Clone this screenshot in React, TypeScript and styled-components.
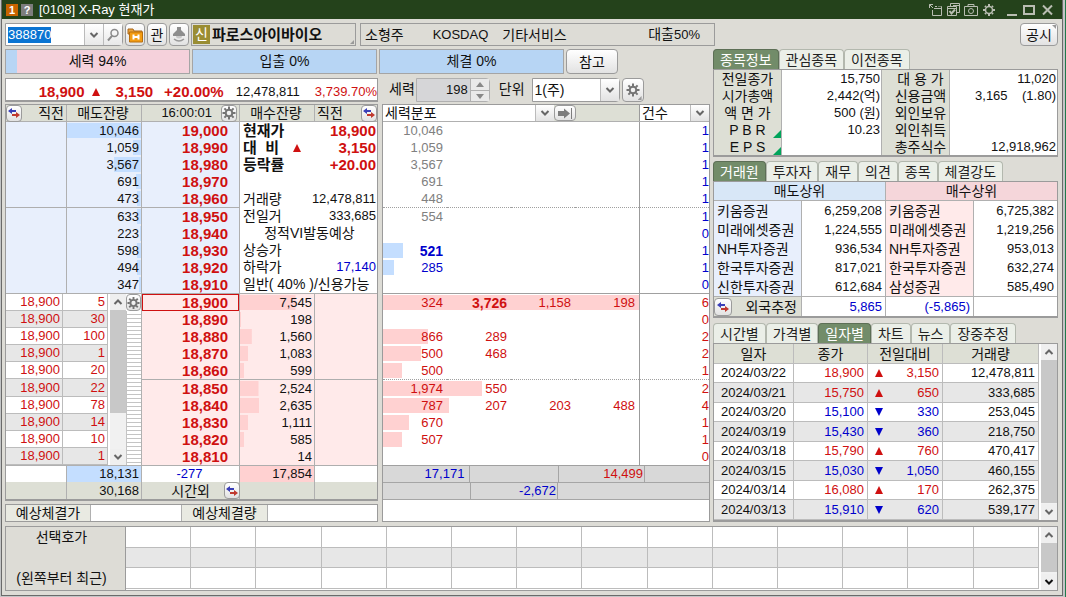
import React, { useEffect, useRef } from 'react';
import styled, { createGlobalStyle, css } from 'styled-components';

const RED = '#cf1010';
const BLUE = '#0000cc';
const LINE = '#9b9b9b';
const FACE = '#dddcd6';
const HEAD = '#dddfd5';

const GlobalStyle = createGlobalStyle`
  *, *::before, *::after { box-sizing: border-box; }
  body {
    margin: 0;
    background: linear-gradient(90deg, #c3c5c6 0 calc(100% - 1px), #1f7a4a 0);
    font-family: "Liberation Sans", "Noto Sans CJK KR", sans-serif;
    font-size: 14px;
    line-height: 16px;
    color: #111;
  }
  button, input, select { font: inherit; color: inherit; }
  table { border-collapse: separate; border-spacing: 0; table-layout: fixed; width: 100%; }
  td, th { padding: 0; font-weight: 400; white-space: nowrap; vertical-align: middle; }
`;

type Tone = 'red' | 'blue' | 'gray' | undefined;
const toneOf = (t: Tone) => (t === 'red' ? RED : t === 'blue' ? BLUE : t === 'gray' ? '#808080' : '#111');

const Window = styled.main`
  margin: 0 3px 0 1px;
  border: 1px solid #6a6a6a;
  border-top: 0;
  background: ${FACE};
`;
const TitleBar = styled.header`
  height: 19px;
  padding: 0 8px 0 4px;
  background: #24421b;
  color: #fff;
  display: flex;
  align-items: center;
  gap: 3px;
`;
const TitleBadge = styled.span<{ $bg: string }>`
  width: 12px;
  height: 12px;
  line-height: 12px;
  font-size: 11px;
  font-weight: 700;
  text-align: center;
  background: ${(p) => p.$bg};
`;
const Title = styled.h1`
  margin: 0 auto 0 3px;
  font-size: 13px;
  font-weight: 400;
`;
const WindowButtons = styled.div`
  display: flex;
  gap: 4px;
  color: #b9bdb2;
  & + & { margin-left: 5px; }
`;
const WindowButton = styled.button`
  padding: 0;
  border: 0;
  background: none;
  height: 14px;
  display: block;
  color: inherit;
  svg { display: block; }
`;
const Content = styled.div`
  padding: 4px 4px 4px 3px;
`;

/* ---------- generic controls ---------- */
const raised = css`
  border: 1px solid ${LINE};
  border-radius: 4px;
  background: linear-gradient(#fff, #e2e2e2);
  padding: 0;
  display: flex;
  align-items: center;
  justify-content: center;
`;
const Button = styled.button<{ $w: number }>`
  ${raised}
  width: ${(p) => p.$w}px;
  position: relative;
  flex: none;
`;
const SmallButton = styled.button`
  ${raised}
  width: 16px;
  height: 17px;
  flex: none;
`;
const Corner = styled.i<{ $pos: 'tr' | 'br' }>`
  position: absolute;
  right: 1px;
  ${(p) => (p.$pos === 'tr' ? 'top: 1px;' : 'bottom: 1px;')}
  width: 4px;
  height: 4px;
  background: #999;
  clip-path: ${(p) => (p.$pos === 'tr' ? 'polygon(0 0, 100% 0, 100% 100%)' : 'polygon(100% 0, 100% 100%, 0 100%)')};
`;
const Num = styled.span<{ $tone?: Tone; $bold?: boolean }>`
  font-size: ${(p) => (p.$bold ? 15 : 13)}px;
  font-weight: ${(p) => (p.$bold ? 700 : 400)};
  color: ${(p) => toneOf(p.$tone)};
`;

/* ---------- toolbar ---------- */
const Toolbar = styled.div`
  height: 23px;
  display: flex;
  gap: 2px;
`;
const CodeBox = styled.div`
  display: flex;
  width: 118px;
  border: 1px solid ${LINE};
  background: #fff;
  border-radius: 0 4px 4px 0;
`;
const CodeInput = styled.input`
  width: 78px;
  min-width: 0;
  border: 0;
  padding: 0 2px;
  font-size: 13px;
  outline: 0;
  &::selection { background: #0a74d2; color: #fff; }
`;
const InnerButton = styled.button`
  flex: 1;
  border: 0;
  border-left: 1px solid #bbb;
  padding: 0;
  background: linear-gradient(#fff, #e8e8e8);
  display: flex;
  align-items: center;
  justify-content: center;
`;
const IconButtons = styled.div`
  display: flex;
  gap: 2px;
`;
const Field = styled.div<{ $w: number }>`
  flex: 0 1 ${(p) => p.$w}px;
  border: 1px solid ${LINE};
  display: flex;
  align-items: center;
  position: relative;
  white-space: nowrap;
`;
const StockBadge = styled.span`
  margin: 0 2px 0 1px;
  width: 17px;
  line-height: 19px;
  text-align: center;
  color: #fff;
  background: #9a8d33;
`;
const StockName = styled.strong`
  font-size: 15px;
`;
const Traits = styled(Field)`
  margin-left: 2px;
  padding: 0 14px 0 4px;
  > :nth-child(2) { margin-left: 29px; }
  > :nth-child(3) { margin-left: 14px; }
  > :last-child { margin-left: auto; }
`;
const Push = styled.div`
  margin-left: auto;
  display: flex;
`;

/* ---------- body ---------- */
const Body = styled.div`
  margin-top: 3px;
  display: grid;
  grid-template-columns: minmax(0, 705fr) minmax(0, 345fr);
  gap: 3px;
`;
const Main = styled.div`
  display: flex;
  flex-direction: column;
`;
const Bars = styled.div`
  height: 25px;
  display: flex;
  gap: 2px;
  padding-right: 92px;
`;
const Bar = styled.div<{ $low: number }>`
  flex: 1;
  border: 1px solid #a5a5a5;
  background: linear-gradient(90deg, #b7d5f4 ${(p) => p.$low}%, #f5d1db ${(p) => p.$low}%);
  text-align: center;
  line-height: 23px;
`;
const LeftGrid = styled.div`
  flex: 1;
  display: grid;
  grid-template-columns: minmax(0, 373fr) minmax(0, 328fr);
  column-gap: 4px;
`;
const QuoteRow = styled(LeftGrid)`
  flex: none;
  margin: 4px 0 3px;
  height: 23px;
`;
const QuoteBox = styled.div`
  border: 1px solid ${LINE};
  border-bottom-width: 2px;
  background: #fff;
  display: flex;
  align-items: center;
  justify-content: flex-end;
  padding-top: 4px;
  white-space: nowrap;
  > :nth-child(2) { margin: 0 16px 0 7px; }
  > :nth-child(4) { margin: 0 12px 0 11px; }
  > :last-child { margin-left: 15px; }
`;
const Options = styled.div`
  display: flex;
  padding-left: 7px;
  line-height: 22px;
  label { flex: none; }
`;
const Spinner = styled.div`
  display: flex;
  width: 74px;
  margin: 0 9px 0 1px;
  border: 1px solid #b0b0b0;
  border-radius: 0 4px 4px 0;
  background: #d6d6d8;
`;
const SpinInput = styled.input`
  width: 53px;
  min-width: 0;
  border: 0;
  padding: 0 2px;
  background: none;
  text-align: right;
  font-size: 13px;
`;
const SpinButtons = styled.div`
  flex: 1;
  display: grid;
  grid-template-rows: 1fr 1fr;
  border-left: 1px solid #b0b0b0;
`;
const SpinButton = styled.button`
  border: 0;
  padding: 0;
  background: #e9e9e9;
  display: flex;
  align-items: center;
  justify-content: center;
  & + & { border-top: 1px solid #b0b0b0; }
`;
const SelectWrap = styled.span<{ $w: number; $flat?: boolean }>`
  flex: none;
  width: ${(p) => p.$w}px;
  display: flex;
  position: relative;
  background: #fff;
  ${(p) => !p.$flat && css`border: 1px solid ${LINE}; border-radius: 0 4px 4px 0; margin: 0 2px 0 7px;`}
`;
const Select = styled.select`
  appearance: none;
  width: 100%;
  border: 0;
  padding: 0 2px;
  background: transparent;
  line-height: 16px;
`;
const SelectArrow = styled.span`
  position: absolute;
  inset: 0 0 0 auto;
  width: 19px;
  border-left: 1px solid #bbb;
  background: linear-gradient(#fff, #e2e2e2);
  display: flex;
  align-items: center;
  justify-content: center;
  pointer-events: none;
`;

/* ---------- order ladder ---------- */
const Stack = styled.div`
  display: flex;
  flex-direction: column;
  justify-content: space-between;
`;
const Panel = styled.section`
  border: 1px solid ${LINE};
  background: #fff;
`;
const LadderPanel = styled(Panel)`
  border-bottom-width: 2px;
`;
const LadderColumns = css`
  display: grid;
  grid-template-columns: minmax(0, 61fr) minmax(0, 75fr) minmax(0, 98fr) minmax(0, 75fr) minmax(0, 62fr);
`;
const LadderHead = styled.div`
  ${LadderColumns}
  height: 17px;
  background: ${HEAD};
  border-bottom: 1px solid #b0b0b0;
`;
const HeadCell = styled.div<{ $align?: string }>`
  border-right: 1px solid #b0b0b0;
  display: flex;
  align-items: center;
  justify-content: ${(p) => p.$align || 'center'};
  padding-right: 2px;
  white-space: nowrap;
  &:last-child { border-right: 0; padding: 0 0 0 2px; }
  ${SmallButton} { margin: -1px 0; }
`;
const Clock = styled(Num)`
  margin-right: 9px;
`;
const LadderBody = styled.div`
  ${LadderColumns}
`;
const Span = styled.div<{ $n: number }>`
  grid-column: span ${(p) => p.$n};
  min-width: 0;
`;
const Row = styled.tr<{ $rule?: boolean }>`
  > td, > th {
    height: ${(p) => (p.$rule ? 18 : 17)}px;
    ${(p) => p.$rule && 'border-bottom: 1px solid #aeaeae;'}
  }
`;
const AskCell = styled.td`
  border-right: 1px solid #b0b0b0;
  background: #e8effc;
  text-align: right;
  padding-right: 2px;
  font-size: 13px;
`;
const AskQty = styled(AskCell)`
  background: linear-gradient(#c4deff, #c4deff) no-repeat right 1px / var(--fill) 15px #e8effc;
`;
const PriceCell = styled.td<{ $side: 'ask' | 'bid'; $hit?: boolean }>`
  border-right: 1px solid #b0b0b0;
  background: ${(p) => (p.$side === 'ask' ? '#e8effc' : '#ffeaea')};
  color: ${RED};
  font-size: 15px;
  font-weight: 700;
  text-align: right;
  padding-right: 11px;
  ${(p) => p.$hit && `box-shadow: inset 0 0 0 1px ${RED};`}
`;
const BidCell = styled.td`
  background: #ffeaea;
  text-align: right;
  padding-right: 2px;
  font-size: 13px;
`;
const BidQty = styled(BidCell)`
  border-right: 1px solid #b0b0b0;
  background: linear-gradient(#ffd1d1, #ffd1d1) no-repeat left 1px / var(--fill) 15px #ffeaea;
`;
const Facts = styled.dl`
  margin: 0;
  padding: 0 1px 0 3px;
  height: 172px;
  border-bottom: 1px solid #b0b0b0;
  display: grid;
  grid-auto-rows: 17px;
`;
const Fact = styled.div<{ $center?: boolean; $bold?: boolean }>`
  display: flex;
  align-items: center;
  justify-content: ${(p) => (p.$center ? 'center' : 'space-between')};
  white-space: nowrap;
  dt { font-weight: ${(p) => (p.$bold ? 700 : 400)}; font-size: ${(p) => (p.$bold ? 15 : 14)}px; }
  dd { margin: 0; }
  svg { margin: 0 auto 0 14px; }
`;
const TickArea = styled.div`
  height: 172px;
  display: flex;
  border-bottom: 1px solid #b0b0b0;
`;
const TickTable = styled.table`
  flex: 1 1 102px;
  width: auto;
  min-width: 0;
  td {
    height: 17px;
    text-align: right;
    padding-right: 2px;
    font-size: 13px;
    color: ${RED};
    border: 0 solid #bcbcbc;
    border-width: 0 1px 1px 0;
  }
  tr:nth-child(even) td { background: #e7e7e7; }
`;
const ScrollTrack = styled.div`
  flex: none;
  width: 16px;
  margin-left: 2px;
  background: #f1f1f1;
  display: flex;
  flex-direction: column;
  justify-content: space-between;
`;
const ScrollButton = styled.button`
  height: 16px;
  width: 100%;
  border: 0;
  padding: 0;
  flex: none;
  background: #efefef;
  display: flex;
  align-items: center;
  justify-content: center;
`;
const Thumb = styled.div<{ $size: number }>`
  height: ${(p) => p.$size}%;
  background: #c8c8c8;
  margin-bottom: auto;
`;
const GearStrip = styled.div`
  flex: none;
  width: 16px;
  border-right: 1px solid #b0b0b0;
  display: flex;
  flex-direction: column;
  ${SmallButton} { width: 15px; }
`;
const Hatch = styled.div`
  flex: 1;
  border-left: 1px solid #c4c4c4;
  background: repeating-linear-gradient(#fff 0 3px, #c4c4c4 3px 4px);
`;
const TotalRow = styled.tr<{ $gray?: boolean }>`
  td {
    height: ${(p) => (p.$gray ? 17 : 16)}px;
    background: ${(p) => (p.$gray ? HEAD : '#fff')};
    border-right: 1px solid #b0b0b0;
    text-align: right;
    padding-right: 2px;
    font-size: 13px;
  }
  td:last-child { border-right: 0; }
`;
const TotalCell = styled.td<{ $fill: string }>`
  && { background: ${(p) => p.$fill}; }
`;
const MidCell = styled.td`
  && { text-align: center; }
`;
const OffHours = styled.div`
  display: flex;
  justify-content: flex-end;
  align-items: center;
  gap: 14px;
  font-size: 14px;
  height: 17px;
  margin-right: -3px;
`;
const ExpectBox = styled(Panel)`
  height: 18px;
  display: grid;
  grid-template-columns: minmax(0, 85fr) minmax(0, 91fr) minmax(0, 86fr) minmax(0, 109fr);
`;
const ExpectLabel = styled.label`
  background: #e9eae2;
  text-align: center;
  border-right: 1px solid #b0b0b0;
  white-space: nowrap;
`;
const ExpectInput = styled.input`
  min-width: 0;
  width: 100%;
  border: 0;
  border-right: 1px solid #b0b0b0;
  background: #fff;
  padding: 0 2px;
  &:last-child { border-right: 0; }
`;

/* ---------- distribution ---------- */
const DistPanel = styled(Panel)`
  display: flex;
  flex-direction: column;
`;
const DistHead = styled.div`
  height: 17px;
  display: grid;
  grid-template-columns: minmax(0, 257fr) minmax(0, 69fr);
  background: ${HEAD};
  border-bottom: 1px solid #b0b0b0;
  > div { display: flex; }
  > div:first-child { border-right: 1px solid ${LINE}; }
  ${SmallButton} { width: 22px; height: 16px; }
`;
const DistRow = styled.tr<{ $rule?: 'solid' | 'dotted' }>`
  background: linear-gradient(var(--tint), var(--tint)) no-repeat left 1px / var(--fill) 15px;
  td {
    height: ${(p) => (p.$rule ? 18 : 17)}px;
    ${(p) => p.$rule && `border-bottom: 1px ${p.$rule} #a0a0a0;`}
  }
`;
const DistCell = styled.td<{ $tone: Tone; $bold?: boolean }>`
  text-align: right;
  padding-right: 4px;
  color: ${(p) => toneOf(p.$tone)};
  font-size: ${(p) => (p.$bold ? 14 : 13)}px;
  font-weight: ${(p) => (p.$bold ? 700 : 400)};
`;
const CountCell = styled.td<{ $tone: Tone }>`
  border-left: 1px solid ${LINE};
  background: #fff;
  text-align: right;
  color: ${(p) => toneOf(p.$tone)};
  font-size: 13px;
`;
const SumTable = styled.table`
  background: #d8d8d8;
  td {
    height: 17px;
    border-bottom: 1px solid #a5a5a5;
    text-align: right;
    padding-right: 1px;
    font-size: 13px;
  }
`;
const SumCell = styled.td<{ $tone: Tone }>`
  color: ${(p) => toneOf(p.$tone)};
  border-right: 1px solid #a5a5a5;
  border-left: 1px solid #a5a5a5;
  &:first-child { border-left: 0; }
`;

/* ---------- right side ---------- */
const Side = styled.div`
  display: flex;
  flex-direction: column;
  min-width: 0;
`;
const Tabs = styled.div`
  display: flex;
  height: 20px;
  white-space: nowrap;
`;
const Tab = styled.button<{ $on?: boolean }>`
  border: 1px solid ${(p) => (p.$on ? '#5d6f56' : '#b3b8ae')};
  border-bottom: 0;
  border-radius: 4px 4px 0 0;
  padding: 0 6px;
  line-height: 18px;
  background: ${(p) => (p.$on ? '#728c69' : '#ebefe8')};
  color: ${(p) => (p.$on ? '#fff' : '#222')};
`;
const SidePanel = styled(Panel)<{ $gap?: number }>`
  border-bottom-width: 2px;
  margin-bottom: ${(p) => p.$gap || 0}px;
`;
const InfoLabel = styled.th<{ $indent?: boolean }>`
  height: 17px;
  background: ${HEAD};
  border-right: 1px solid #b0b0b0;
  position: relative;
  padding-left: ${(p) => (p.$indent ? 10 : 0)}px;
`;
const InfoValue = styled.td`
  height: 17px;
  text-align: right;
  padding-right: 1px;
  font-size: 13px;
  white-space: pre;
  &:nth-child(2) { border-right: 1px solid #b0b0b0; }
`;
const GreenCorner = styled.i`
  position: absolute;
  right: 0;
  bottom: 0;
  width: 8px;
  height: 8px;
  background: #00a45a;
  clip-path: polygon(100% 0, 100% 100%, 0 100%);
`;
const BrokerHead = styled.th<{ $bg: string }>`
  height: 19px;
  background: ${(p) => p.$bg};
  border-bottom: 1px solid #b0b0b0;
  &:first-child { border-right: 1px solid #b0b0b0; }
`;
const BrokerName = styled.td<{ $bg: string }>`
  height: 19px;
  background: ${(p) => p.$bg};
  border-right: 1px solid #b0b0b0;
  padding-left: 3px;
`;
const BrokerQty = styled.td`
  text-align: right;
  padding-right: 3px;
  font-size: 13px;
  &:nth-child(2) { border-right: 1px solid #b0b0b0; }
`;
const ForeignRow = styled.tr`
  td, th { height: 20px; border-top: 1px solid #b0b0b0; border-right: 1px solid #b0b0b0; }
  td { text-align: right; padding-right: 3px; font-size: 13px; color: ${BLUE}; }
  td:last-child { border-right: 0; }
  th { background: ${HEAD}; }
`;
const ForeignLabel = styled.div`
  display: flex;
  align-items: center;
  justify-content: space-between;
  padding-right: 4px;
  ${SmallButton} { height: 18px; width: 18px; }
`;
const HistoryWrap = styled.div`
  display: flex;
`;
const HistoryTable = styled.table`
  flex: 1;
  width: auto;
  min-width: 0;
  th, td { border: 0 solid #bcbcbc; border-width: 0 1px 1px 0; }
  th { height: 20px; background: ${HEAD}; }
  td { height: 19px; font-size: 13px; text-align: right; padding-right: 3px; }
  tbody tr:nth-child(even) td { background: #e7e7e7; height: 20px; }
  td:first-child { text-align: center; padding: 0; }
`;
const Delta = styled.span`
  display: flex;
  align-items: center;
  justify-content: space-between;
  padding-left: 7px;
`;

/* ---------- bottom ---------- */
const BottomPanel = styled(Panel)`
  margin-top: 4px;
  height: 65px;
  display: flex;
`;
const BottomLabel = styled.div`
  flex: none;
  width: 120px;
  padding: 2px 8px 4px 0;
  background: ${FACE};
  border-right: 1px solid ${LINE};
  display: flex;
  flex-direction: column;
  justify-content: space-between;
  text-align: center;
`;
const BlankTable = styled.table`
  flex: 1;
  width: auto;
  min-width: 0;
  height: 62px;
  td { border: 0 solid #bcbcbc; border-width: 0 1px 1px 0; }
  tr:nth-child(2) td { background: #e7e7e7; }
`;

/* ---------- drawings ---------- */
const Tri = ({ up }: { up: boolean }) => (
  <svg width="8" height="8" viewBox="0 0 8 8" aria-hidden="true">
    <path d={up ? 'M4 0 8 8H0Z' : 'M0 0H8L4 8Z'} fill={up ? RED : BLUE} />
  </svg>
);
const Chevron = ({ up, c = '#666' }: { up?: boolean; c?: string }) => (
  <svg width="10" height="8" viewBox="0 0 10 8" fill="none" stroke={c} strokeWidth="2" aria-hidden="true">
    <path d={up ? 'M1.5 6 5 2.5 8.5 6' : 'M1.5 2 5 5.5 8.5 2'} />
  </svg>
);
const Gear = () => (
  <svg width="14" height="14" viewBox="0 0 14 14" fill="none" stroke="#747474" aria-hidden="true">
    <circle cx="7" cy="7" r="3.3" strokeWidth="2" />
    <path d="M7 .5V3M7 11v2.500M.5 7H3M11 7h2.500M2.400 2.400 4.200 4.200M9.800 9.800l1.800 1.800M11.600 2.400 9.800 4.200M4.200 9.800 2.400 11.600" strokeWidth="2" />
  </svg>
);
const Swap = () => (
  <svg width="14" height="12" viewBox="0 0 14 12" aria-hidden="true">
    <path d="M1 4 5 1V3H9V5H5V7Z" fill="#3a3fb8" />
    <path d="M13 8 9 5V7H5V9H9V11Z" fill="#c0392f" />
  </svg>
);
const Search = () => (
  <svg width="14" height="14" viewBox="0 0 14 14" fill="none" stroke="#8a8a8a" strokeWidth="1.5" aria-hidden="true">
    <circle cx="8.5" cy="5" r="3.5" />
    <path d="M6 7.800 2 12.500" strokeWidth="2" />
  </svg>
);
const Folder = () => (
  <svg width="16" height="16" viewBox="0 0 16 16" aria-hidden="true">
    <path d="M1 2h5l1 2h8v3H1Z" fill="#e8a33d" stroke="#a8661a" />
    <path d="M2.500 5H15.500V15H2.500Z" fill="#f39c12" stroke="#b86f0d" />
    <path d="M6.500 7.500v5M11.500 7.500v5M6.500 10h5" stroke="#fff" strokeWidth="2" />
  </svg>
);
const Lamp = () => (
  <svg width="14" height="16" viewBox="0 0 14 16" aria-hidden="true">
    <path d="M5 0h4v3l4 4v2H1V7l4-4Z" fill="#8d8d8d" />
    <path d="M4 9h6a3 2.500 0 0 1-6 0Z" fill="#c9c9c9" />
    <path d="M2 12q5 4 10 0" fill="none" stroke="#9a9a9a" strokeWidth="1.5" />
  </svg>
);
const Forward = () => (
  <svg width="16" height="11" viewBox="0 0 16 11" aria-hidden="true">
    <path d="M1 3H7V.5L13 5.500 7 10.500V8H1Z" fill="#7d7d7d" />
    <path d="M14.500 0V11" stroke="#7d7d7d" />
  </svg>
);
const line = { width: 14, height: 14, viewBox: '0 0 14 14', fill: 'none', stroke: 'currentColor' };

/* ---------- data ---------- */
const MAX_QTY = 10046;
const asks: [string, string][] = [
  ['10,046', '19,000'], ['1,059', '18,990'], ['3,567', '18,980'], ['691', '18,970'], ['473', '18,960'],
  ['633', '18,950'], ['223', '18,940'], ['598', '18,930'], ['494', '18,920'], ['347', '18,910'],
];
const bids: [string, string][] = [
  ['18,900', '7,545'], ['18,890', '198'], ['18,880', '1,560'], ['18,870', '1,083'], ['18,860', '599'],
  ['18,850', '2,524'], ['18,840', '2,635'], ['18,830', '1,111'], ['18,820', '585'], ['18,810', '14'],
];
const ticks = ['5', '30', '100', '1', '20', '22', '78', '14', '10', '1'];
const fill = (q: string) => ({ '--fill': `${Math.round((Number(q.replace(',', '')) / MAX_QTY) * 100)}%` }) as React.CSSProperties;

type Dist = { v: string[]; n: string; w?: number; tone: Tone; bold?: number };
const dist: Dist[] = [
  { v: ['10,046'], n: '1', tone: 'gray' }, { v: ['1,059'], n: '1', tone: 'gray' }, { v: ['3,567'], n: '1', tone: 'gray' },
  { v: ['691'], n: '1', tone: 'gray' }, { v: ['448'], n: '1', tone: 'gray' }, { v: ['554'], n: '1', tone: 'gray' },
  { v: [], n: '0', tone: 'blue' }, { v: ['521'], n: '1', w: 20, tone: 'blue', bold: 0 }, { v: ['285'], n: '1', w: 11, tone: 'blue' },
  { v: [], n: '0', tone: 'blue' },
  { v: ['324', '3,726', '1,158', '198'], n: '6', w: 257, tone: 'red', bold: 1 }, { v: [], n: '0', tone: 'red' },
  { v: ['866', '289'], n: '2', w: 45, tone: 'red' }, { v: ['500', '468'], n: '2', w: 38, tone: 'red' }, { v: ['500'], n: '1', w: 19, tone: 'red' },
  { v: ['1,974', '550'], n: '2', w: 99, tone: 'red' }, { v: ['787', '207', '203', '488'], n: '4', w: 66, tone: 'red' },
  { v: ['670'], n: '1', w: 26, tone: 'red' }, { v: ['507'], n: '1', w: 19, tone: 'red' }, { v: [], n: '0', tone: 'red' },
];
const distStyle = (d: Dist) => ({
  '--fill': `${((d.w || 0) / 326) * 100}%`,
  '--tint': d.tone === 'red' ? '#ffd1d1' : '#c4deff',
}) as React.CSSProperties;

const info: [string, string, string, string][] = [
  ['전일종가', '15,750', '대 용 가', '11,020'],
  ['시가총액', '2,442(억)', '신용금액', '3,165    (1.80)'],
  ['액 면 가', '500 (원)', '외인보유', ''],
  ['P B R', '10.23', '외인취득', ''],
  ['E P S', '', '총주식수', '12,918,962'],
];
const brokers: [string, string, string, string][] = [
  ['키움증권', '6,259,208', '키움증권', '6,725,382'],
  ['미래에셋증권', '1,224,555', '미래에셋증권', '1,219,256'],
  ['NH투자증권', '936,534', 'NH투자증권', '953,013'],
  ['한국투자증권', '817,021', '한국투자증권', '632,274'],
  ['신한투자증권', '612,684', '삼성증권', '585,490'],
];
const history: [string, string, boolean, string, string][] = [
  ['2024/03/22', '18,900', true, '3,150', '12,478,811'],
  ['2024/03/21', '15,750', true, '650', '333,685'],
  ['2024/03/20', '15,100', false, '330', '253,045'],
  ['2024/03/19', '15,430', false, '360', '218,750'],
  ['2024/03/18', '15,790', true, '760', '470,417'],
  ['2024/03/15', '15,030', false, '1,050', '460,155'],
  ['2024/03/14', '16,080', true, '170', '262,375'],
  ['2024/03/13', '15,910', false, '620', '539,177'],
];

const Cols = ({ w }: { w: number[] }) => (
  <colgroup>{w.map((x, i) => <col key={i} width={`${(x / w.reduce((a, b) => a + b, 0)) * 100}%`} />)}</colgroup>
);
const TabRow = ({ names, on }: { names: string[]; on: number }) => (
  <Tabs role="tablist">
    {names.map((n, i) => <Tab key={n} role="tab" aria-selected={i === on} $on={i === on}>{n}</Tab>)}
  </Tabs>
);
const Scrollbar = ({ size, dark }: { size: number; dark?: boolean }) => (
  <ScrollTrack>
    <ScrollButton aria-label="위로"><Chevron up /></ScrollButton>
    <Thumb $size={size} />
    <ScrollButton aria-label="아래로"><Chevron c={dark ? '#111' : '#666'} /></ScrollButton>
  </ScrollTrack>
);

function TopBar() {
  const code = useRef<HTMLInputElement>(null);
  useEffect(() => {
    code.current?.focus();
    code.current?.select();
  }, []);
  return (
    <Toolbar>
      <CodeBox>
        <CodeInput ref={code} defaultValue="388870" aria-label="종목코드" />
        <InnerButton aria-label="목록"><Chevron /></InnerButton>
        <InnerButton aria-label="검색"><Search /></InnerButton>
      </CodeBox>
      <IconButtons>
        <Button $w={20} aria-label="보유"><Folder /></Button>
        <Button $w={20}>관</Button>
        <Button $w={20} aria-label="알림"><Lamp /></Button>
      </IconButtons>
      <Field $w={165}>
        <StockBadge>신</StockBadge>
        <StockName>파로스아이바이오</StockName>
        <Corner $pos="br" />
      </Field>
      <Traits $w={355}>
        <span>소형주</span>
        <Num>KOSDAQ</Num>
        <span>기타서비스</span>
        <span>대출<Num>50%</Num></span>
      </Traits>
      <Push><Button $w={38}>공시<Corner $pos="tr" /></Button></Push>
    </Toolbar>
  );
}

function Ladder() {
  return (
    <LadderPanel>
      <LadderHead>
        <HeadCell $align="space-between"><SmallButton aria-label="전환"><Swap /></SmallButton>직전</HeadCell>
        <HeadCell>매도잔량</HeadCell>
        <HeadCell $align="flex-end"><Clock>16:00:01</Clock><SmallButton aria-label="설정"><Gear /></SmallButton></HeadCell>
        <HeadCell>매수잔량</HeadCell>
        <HeadCell $align="space-between">직전<SmallButton aria-label="전환"><Swap /></SmallButton></HeadCell>
      </LadderHead>
      <LadderBody>
        <Span $n={3}>
          <table>
            <Cols w={[61, 75, 98]} />
            <tbody>
              {asks.map(([q, p], i) => (
                <Row key={p} $rule={i % 5 === 4}>
                  <AskCell />
                  <AskQty style={fill(q)}>{q}</AskQty>
                  <PriceCell $side="ask">{p}</PriceCell>
                </Row>
              ))}
            </tbody>
          </table>
        </Span>
        <Span $n={2}>
          <Facts>
            <Fact $bold><dt>현재가</dt><dd><Num $bold $tone="red">18,900</Num></dd></Fact>
            <Fact $bold><dt>대&nbsp;&nbsp;비</dt><Tri up /><dd><Num $bold $tone="red">3,150</Num></dd></Fact>
            <Fact $bold><dt>등락률</dt><dd><Num $bold $tone="red">+20.00</Num></dd></Fact>
            <Fact />
            <Fact><dt>거래량</dt><dd><Num>12,478,811</Num></dd></Fact>
            <Fact><dt>전일거</dt><dd><Num>333,685</Num></dd></Fact>
            <Fact $center><dt>정적VI발동예상</dt></Fact>
            <Fact><dt>상승가</dt></Fact>
            <Fact><dt>하락가</dt><dd><Num $tone="blue">17,140</Num></dd></Fact>
            <Fact><dt>일반( 40% )/신용가능</dt></Fact>
          </Facts>
        </Span>
        <Span $n={2}>
          <TickArea>
            <TickTable>
              <Cols w={[57, 45]} />
              <tbody>
                {ticks.map((t, i) => <tr key={i}><td>18,900</td><td>{t}</td></tr>)}
              </tbody>
            </TickTable>
            <Scrollbar size={60} />
            <GearStrip>
              <SmallButton aria-label="설정"><Gear /></SmallButton>
              <Hatch />
            </GearStrip>
          </TickArea>
        </Span>
        <Span $n={3}>
          <table>
            <Cols w={[98, 75, 62]} />
            <tbody>
              {bids.map(([p, q], i) => (
                <Row key={p} $rule={i % 5 === 4}>
                  <PriceCell $side="bid" $hit={i === 0}>{p}</PriceCell>
                  <BidQty style={fill(q)}>{q}</BidQty>
                  <BidCell />
                </Row>
              ))}
            </tbody>
          </table>
        </Span>
      </LadderBody>
      <table>
        <Cols w={[61, 75, 98, 75, 62]} />
        <tbody>
          <TotalRow>
            <td />
            <TotalCell $fill="#c4deff">18,131</TotalCell>
            <MidCell><Num $tone="blue">-277</Num></MidCell>
            <TotalCell $fill="#ffd1d1">17,854</TotalCell>
            <td />
          </TotalRow>
          <TotalRow $gray>
            <td />
            <td>30,168</td>
            <td><OffHours>시간외<SmallButton aria-label="전환"><Swap /></SmallButton></OffHours></td>
            <td />
            <td />
          </TotalRow>
        </tbody>
      </table>
    </LadderPanel>
  );
}

function Distribution() {
  return (
    <DistPanel>
      <DistHead>
        <div>
          <SelectWrap $w={171} $flat>
            <Select aria-label="분포 항목"><option>세력분포</option></Select>
            <SelectArrow><Chevron /></SelectArrow>
          </SelectWrap>
          <SmallButton aria-label="다음"><Forward /></SmallButton>
        </div>
        <div>
          <SelectWrap $w={69} $flat>
            <Select aria-label="건수 항목"><option>건수</option></Select>
            <SelectArrow><Chevron /></SelectArrow>
          </SelectWrap>
        </div>
      </DistHead>
      <table>
        <Cols w={[64, 64, 64, 64, 70]} />
        <tbody>
          {dist.map((d, i) => (
            <DistRow key={i} style={distStyle(d)} $rule={i % 10 === 4 ? 'dotted' : i % 10 === 9 ? 'solid' : undefined}>
              {[0, 1, 2, 3].map((c) => <DistCell key={c} $tone={d.tone} $bold={d.bold === c}>{d.v[c]}</DistCell>)}
              <CountCell $tone={d.tone === 'gray' ? 'blue' : d.tone}>{d.n}</CountCell>
            </DistRow>
          ))}
        </tbody>
      </table>
      <SumTable>
        <Cols w={[87, 88, 87, 64]} />
        <tbody>
          <tr><SumCell $tone="blue">17,171&nbsp;</SumCell><td /><SumCell $tone="red">14,499</SumCell><td /></tr>
          <tr><td /><SumCell $tone="blue">-2,672</SumCell><td /><td /></tr>
        </tbody>
      </SumTable>
    </DistPanel>
  );
}

function SideColumn() {
  return (
    <Side>
      <TabRow names={['종목정보', '관심종목', '이전종목']} on={0} />
      <SidePanel $gap={4}>
        <table>
          <Cols w={[68, 100, 68, 107]} />
          <tbody>
            {info.map(([a, b, c, d], i) => (
              <tr key={a}>
                <InfoLabel scope="row">{a}{i > 2 && <GreenCorner />}</InfoLabel>
                <InfoValue>{b}</InfoValue>
                <InfoLabel scope="row" $indent>{c}</InfoLabel>
                <InfoValue>{d}</InfoValue>
              </tr>
            ))}
          </tbody>
        </table>
      </SidePanel>
      <TabRow names={['거래원', '투자자', '재무', '의견', '종목', '체결강도']} on={0} />
      <SidePanel $gap={5}>
        <table>
          <Cols w={[88, 84, 88, 83]} />
          <thead>
            <tr><BrokerHead colSpan={2} $bg="#d8e7f7">매도상위</BrokerHead><BrokerHead colSpan={2} $bg="#f5d6da">매수상위</BrokerHead></tr>
          </thead>
          <tbody>
            {brokers.map(([a, b, c, d]) => (
              <tr key={a}>
                <BrokerName $bg="#e8effc">{a}</BrokerName><BrokerQty>{b}</BrokerQty>
                <BrokerName $bg="#ffeaea">{c}</BrokerName><BrokerQty>{d}</BrokerQty>
              </tr>
            ))}
            <ForeignRow>
              <th scope="row"><ForeignLabel><SmallButton aria-label="전환"><Swap /></SmallButton>외국추정</ForeignLabel></th>
              <td>5,865</td><td>(-5,865)</td><td />
            </ForeignRow>
          </tbody>
        </table>
      </SidePanel>
      <TabRow names={['시간별', '가격별', '일자별', '차트', '뉴스', '장중추정']} on={2} />
      <SidePanel>
        <HistoryWrap>
          <HistoryTable>
            <Cols w={[80, 74, 75, 96]} />
            <thead><tr><th>일자</th><th>종가</th><th>전일대비</th><th>거래량</th></tr></thead>
            <tbody>
              {history.map(([day, close, up, diff, vol]) => (
                <tr key={day}>
                  <td>{day}</td>
                  <td><Num $tone={up ? 'red' : 'blue'}>{close}</Num></td>
                  <td><Delta><Tri up={up} /><Num $tone={up ? 'red' : 'blue'}>{diff}</Num></Delta></td>
                  <td>{vol}</td>
                </tr>
              ))}
            </tbody>
          </HistoryTable>
          <Scrollbar size={81} />
        </HistoryWrap>
      </SidePanel>
    </Side>
  );
}

export default function App() {
  return (
    <>
      <GlobalStyle />
      <Window>
        <TitleBar>
          <TitleBadge $bg="#c86400">1</TitleBadge>
          <TitleBadge $bg="#7d7d7d">?</TitleBadge>
          <Title>[0108] X-Ray 현재가</Title>
          <WindowButtons>
            <WindowButton aria-label="분리"><svg {...line}><path d="M1.500 5V1.500H5M1.500 1.500 5 5M6 12.500h7.500v-9h-1M4.500 7v5.500H7M6 5.500h7.500M7 3.500h2M10.500 3.500h1" /></svg></WindowButton>
            <WindowButton aria-label="복사"><svg {...line}><path d="M4.500 3V.5h9v9H11M1.500 3.500h9v9h-9ZM1.500 5.500h9M7 2.500h6" /><path d="M3.500 8 5.500 10.500 9 6.500" strokeWidth="2" /></svg></WindowButton>
            <WindowButton aria-label="캡처"><svg {...line}><path d="M.5 3.500h13v9H.5ZM4 3V1.500h6V3" /><circle cx="7" cy="8" r="2.5" /></svg></WindowButton>
            <WindowButton aria-label="설정"><svg {...line}><circle cx="7" cy="7" r="3.5" strokeWidth="1.5" /><path d="M7 1v2M7 11v2M1 7h2M11 7h2M3 3l1 1M10 10l1 1M11 3l-1 1M4 10l-1 1" strokeWidth="2" /></svg></WindowButton>
          </WindowButtons>
          <WindowButtons>
            <WindowButton aria-label="최소화"><svg {...line}><path d="M3 12H13" strokeWidth="2" /></svg></WindowButton>
            <WindowButton aria-label="최대화"><svg {...line}><path d="M2 3H12V11H2Z" strokeWidth="2" /></svg></WindowButton>
            <WindowButton aria-label="닫기"><svg {...line}><path d="M3 2.500 12 11.500M12 2.500 3 11.500" strokeWidth="2" /></svg></WindowButton>
          </WindowButtons>
        </TitleBar>
        <Content>
          <TopBar />
          <Body>
            <Main>
              <Bars>
                <Bar $low={6}>세력 94%</Bar>
                <Bar $low={100}>입출 0%</Bar>
                <Bar $low={100}>체결 0%</Bar>
                <Button $w={52}>참고</Button>
              </Bars>
              <QuoteRow>
                <QuoteBox>
                  <Num $bold $tone="red">18,900</Num>
                  <Tri up />
                  <Num $bold $tone="red">3,150</Num>
                  <Num $bold $tone="red">+20.00%</Num>
                  <Num>12,478,811</Num>
                  <Num $tone="red">3,739.70%</Num>
                </QuoteBox>
                <Options>
                  <label htmlFor="power">세력</label>
                  <Spinner>
                    <SpinInput id="power" defaultValue="198" />
                    <SpinButtons>
                      <SpinButton aria-label="증가"><svg width="8" height="5"><path d="M4 0 8 5H0Z" fill="#888" /></svg></SpinButton>
                      <SpinButton aria-label="감소"><svg width="8" height="5"><path d="M0 0H8L4 5Z" fill="#888" /></svg></SpinButton>
                    </SpinButtons>
                  </Spinner>
                  <label htmlFor="unit">단위</label>
                  <SelectWrap $w={88}>
                    <Select id="unit"><option>1(주)</option></Select>
                    <SelectArrow><Chevron /></SelectArrow>
                  </SelectWrap>
                  <Button $w={22} aria-label="설정"><Gear /><Corner $pos="br" /></Button>
                </Options>
              </QuoteRow>
              <LeftGrid>
                <Stack>
                  <Ladder />
                  <ExpectBox>
                    <ExpectLabel htmlFor="expPrice">예상체결가</ExpectLabel>
                    <ExpectInput id="expPrice" />
                    <ExpectLabel htmlFor="expQty">예상체결량</ExpectLabel>
                    <ExpectInput id="expQty" />
                  </ExpectBox>
                </Stack>
                <Distribution />
              </LeftGrid>
            </Main>
            <SideColumn />
          </Body>
          <BottomPanel>
            <BottomLabel><span>선택호가</span><span>(왼쪽부터 최근)</span></BottomLabel>
            <BlankTable>
              <tbody>
                {[0, 1, 2].map((r) => <tr key={r}>{Array.from({ length: 14 }, (_, c) => <td key={c} />)}</tr>)}
              </tbody>
            </BlankTable>
            <Scrollbar size={46} dark />
          </BottomPanel>
        </Content>
      </Window>
    </>
  );
}
